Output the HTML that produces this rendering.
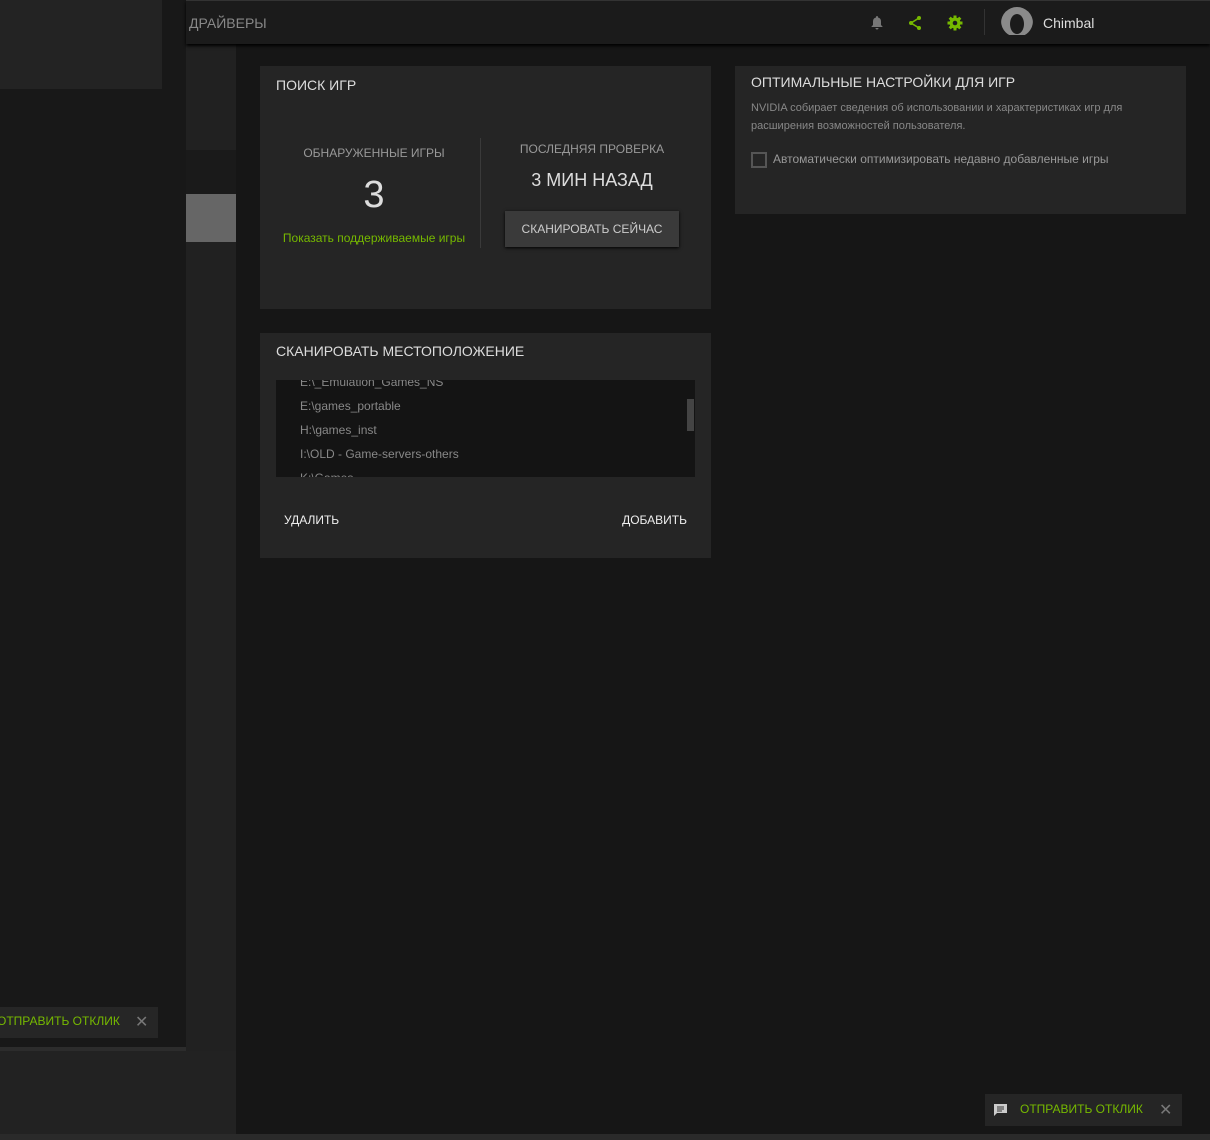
<!DOCTYPE html>
<html><head><meta charset="utf-8"><style>
*{margin:0;padding:0;box-sizing:border-box}
body{width:1210px;height:1140px;background:#161616;font-family:"Liberation Sans","Noto Sans CJK SC",sans-serif;position:relative;overflow:hidden}
.a{position:absolute}
.card{position:absolute;background:#252525}
.t{position:absolute;white-space:nowrap}
</style></head><body>
<div class="a" style="left:0;top:0;width:186px;height:1048px;background:#181818"></div>
<div class="a" style="left:0;top:0;width:162px;height:89px;background:#232323"></div>
<div class="a" style="left:186px;top:44px;width:50px;height:1092px;background:#212121"></div>
<div class="a" style="left:186px;top:150px;width:50px;height:44px;background:#1a1a1a"></div>
<div class="a" style="left:186px;top:194px;width:50px;height:48px;background:#666"></div>
<div class="a" style="left:0;top:1047px;width:186px;height:4px;background:#2c2c2c"></div>
<div class="a" style="left:0;top:1051px;width:236px;height:84px;background:#222"></div>
<div class="a" style="left:0;top:1134px;width:1210px;height:6px;background:#2a2a2a"></div>
<div class="a" style="left:186px;top:0;width:1024px;height:44px;background:#1b1b1b;border-top:1px solid #333;box-shadow:0 2px 3px #000"></div>
<div class="t" style="left:189px;top:15px;font-size:14px;color:#888">ДРАЙВЕРЫ</div>
<svg class="a" style="left:870px;top:15px" width="14" height="15" viewBox="0 0 14 15"><path d="M7 1a1 1 0 0 1 1 1v.5a4 4 0 0 1 3 4V10l1.5 1.5V12h-11v-.5L3 10V6.5a4 4 0 0 1 3-4V2a1 1 0 0 1 1-1zM5.5 13h3a1.5 1.5 0 0 1-3 0z" fill="#777"/></svg>
<svg class="a" style="left:907px;top:15px" width="16" height="16" viewBox="0 0 16 16"><path d="M12 3L4 8l8 5" stroke="#76b900" stroke-width="1.6" fill="none"/><circle cx="12" cy="3" r="2" fill="#76b900"/><circle cx="4" cy="8" r="2" fill="#76b900"/><circle cx="12" cy="13" r="2" fill="#76b900"/></svg>
<svg class="a" style="left:947px;top:15px" width="16" height="16" viewBox="0 0 16 16"><g fill="#76b900"><circle cx="8" cy="8" r="5.5"/><rect x="6.5" y="0.5" width="3" height="15"/><rect x="0.5" y="6.5" width="15" height="3"/><rect x="6.5" y="0.5" width="3" height="15" transform="rotate(45 8 8)"/><rect x="6.5" y="0.5" width="3" height="15" transform="rotate(-45 8 8)"/></g><circle cx="8" cy="8" r="2.3" fill="#1b1b1b"/></svg>
<div class="a" style="left:984px;top:9px;width:1px;height:26px;background:#333"></div>
<svg class="a" style="left:1001px;top:7px" width="32" height="28" viewBox="0 0 32 28"><defs><clipPath id="c"><circle cx="16" cy="14" r="16"/></clipPath></defs><circle cx="16" cy="16" r="16" fill="#8a8a8a" clip-path="url(#c)"/><ellipse cx="16" cy="17" rx="7" ry="10" fill="#1b1b1b"/></svg>
<div class="t" style="left:1043px;top:15px;font-size:14px;color:#ddd">Chimbal</div>

<div class="card" style="left:260px;top:66px;width:451px;height:243px">
<div class="t" style="left:16px;top:11px;font-size:14px;color:#ddd">ПОИСК ИГР</div>
<div class="t" style="left:0;width:228px;text-align:center;top:80px;font-size:12px;color:#999">ОБНАРУЖЕННЫЕ ИГРЫ</div>
<div class="t" style="left:0;width:228px;text-align:center;top:108px;font-size:38px;color:#ddd">3</div>
<div class="t" style="left:0;width:228px;text-align:center;top:165px;font-size:12px;color:#76b900">Показать поддерживаемые игры</div>
<div class="a" style="left:220px;top:72px;width:1px;height:110px;background:#3a3a3a"></div>
<div class="t" style="left:232px;width:200px;text-align:center;top:76px;font-size:12px;color:#999">ПОСЛЕДНЯЯ ПРОВЕРКА</div>
<div class="t" style="left:232px;width:200px;text-align:center;top:104px;font-size:18px;color:#ddd">3 МИН НАЗАД</div>
<div class="a" style="left:245px;top:145px;width:174px;height:36px;background:#3a3a3a;box-shadow:0 1px 3px #000;color:#ccc;font-size:12px;text-align:center;line-height:36px">СКАНИРОВАТЬ СЕЙЧАС</div>
</div>

<div class="card" style="left:735px;top:66px;width:451px;height:148px">
<div class="t" style="left:16px;top:8px;font-size:14px;color:#ddd">ОПТИМАЛЬНЫЕ НАСТРОЙКИ ДЛЯ ИГР</div>
<div class="a" style="left:16px;top:33px;width:420px;font-size:11px;line-height:18px;color:#888">NVIDIA собирает сведения об использовании и характеристиках игр для расширения возможностей пользователя.</div>
<div class="a" style="left:16px;top:86px;width:16px;height:16px;border:2px solid #555"></div>
<div class="t" style="left:38px;top:86px;font-size:12px;color:#999">Автоматически оптимизировать недавно добавленные игры</div>
</div>

<div class="card" style="left:260px;top:333px;width:451px;height:225px">
<div class="t" style="left:16px;top:10px;font-size:14px;color:#ddd">СКАНИРОВАТЬ МЕСТОПОЛОЖЕНИЕ</div>
<div class="a" style="left:16px;top:47px;width:419px;height:97px;background:#141414;overflow:hidden">
<div class="t" style="left:24px;top:-5px;font-size:12px;color:#888">E:\_Emulation_Games_NS</div>
<div class="t" style="left:24px;top:19px;font-size:12px;color:#888">E:\games_portable</div>
<div class="t" style="left:24px;top:43px;font-size:12px;color:#888">H:\games_inst</div>
<div class="t" style="left:24px;top:67px;font-size:12px;color:#888">I:\OLD - Game-servers-others</div>
<div class="t" style="left:24px;top:91px;font-size:12px;color:#888">K:\Games</div>
<div class="a" style="left:411px;top:19px;width:7px;height:32px;background:#444"></div>
</div>
<div class="t" style="left:24px;top:180px;font-size:12px;color:#eee">УДАЛИТЬ</div>
<div class="t" style="right:24px;top:180px;font-size:12px;color:#eee">ДОБАВИТЬ</div>
</div>

<div class="a" style="left:0;top:1007px;width:158px;height:31px;background:#262626"></div>
<div class="t" style="left:-3px;top:1014px;font-size:12px;color:#76b900">ОТПРАВИТЬ ОТКЛИК</div>
<div class="t" style="left:135px;top:1012px;font-size:16px;color:#777">✕</div>

<div class="a" style="left:985px;top:1094px;width:197px;height:32px;background:#252525"></div>
<svg class="a" style="left:993px;top:1103px" width="15" height="14" viewBox="0 0 15 14"><path d="M1 1h13v9H4l-3 3z" fill="#ccc"/><path d="M4 4h7M4 6h7M4 8h5" stroke="#333" stroke-width="1"/></svg>
<div class="t" style="left:1020px;top:1102px;font-size:12px;color:#76b900">ОТПРАВИТЬ ОТКЛИК</div>
<div class="t" style="left:1159px;top:1100px;font-size:16px;color:#777">✕</div>
</body></html>
